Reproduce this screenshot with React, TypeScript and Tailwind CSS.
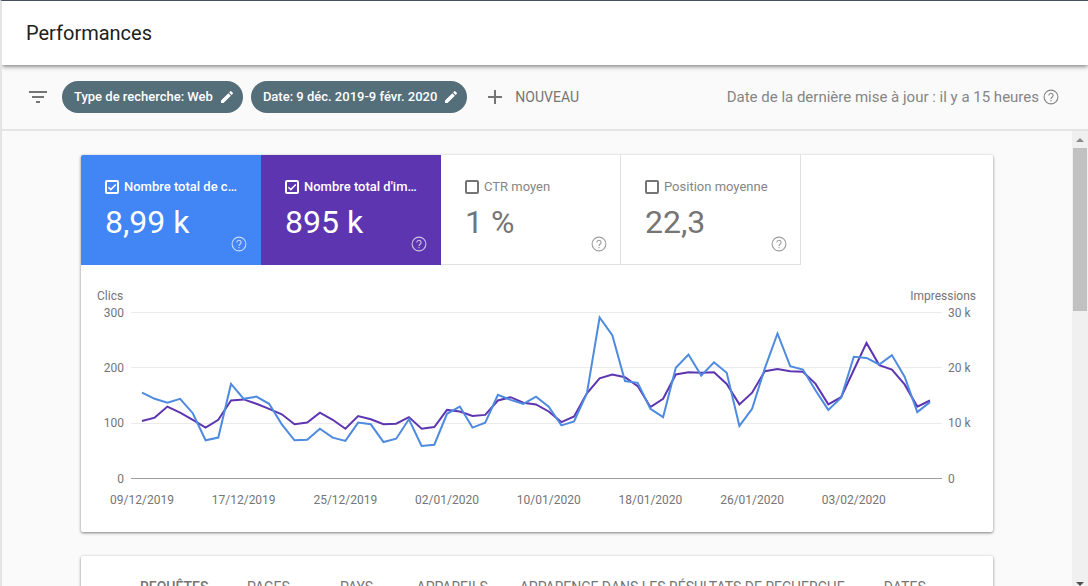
import React, { useState } from 'react';
import { MdAdd, MdEdit, MdFilterList } from 'react-icons/md';

interface Metric {
  id: string;
  label: string;
  value: string;
  active: string;
}

const METRICS: Metric[] = [
  { id: 'clicks', label: 'Nombre total de clics', value: '8,99 k', active: 'bg-[#4285f4] text-white' },
  { id: 'impressions', label: "Nombre total d'impressions", value: '895 k', active: 'bg-[#5e35b1] text-white' },
  { id: 'ctr', label: 'CTR moyen', value: '1 %', active: 'bg-[#00897b] text-white' },
  { id: 'position', label: 'Position moyenne', value: '22,3', active: 'bg-[#e8710a] text-white' },
];

// One value per day, 09/12/2019 to 09/02/2020
const CLICKS = [
  155, 144, 137, 144, 118, 69, 74, 171, 144, 148, 135, 98, 69, 70, 90, 74, 68, 101, 98, 66, 72,
  107, 59, 61, 117, 130, 92, 101, 151, 142, 135, 148, 130, 96, 103, 154, 291, 259, 176, 173, 126, 111,
  200, 224, 186, 210, 191, 95, 126, 199, 262, 203, 197, 159, 124, 146, 220, 218, 206, 223, 184, 120, 138,
];

// In hundreds, so both series share the same scale
const IMPRESSIONS = [
  104, 110, 130, 119, 106, 92, 106, 141, 143, 135, 126, 116, 98, 101, 119, 106, 90, 113, 107, 98, 99,
  111, 90, 93, 124, 121, 113, 115, 141, 147, 137, 134, 121, 102, 112, 154, 181, 188, 183, 167, 129, 144,
  188, 192, 191, 192, 171, 134, 155, 194, 198, 194, 193, 171, 134, 147, 196, 245, 205, 197, 170, 130, 141,
];

const DATES = ['09/12/2019', '17/12/2019', '25/12/2019', '02/01/2020', '10/01/2020', '18/01/2020', '26/01/2020', '03/02/2020'];

const TABS = ['Requêtes', 'Pages', 'Pays', 'Appareils', 'Apparence dans les résultats de recherche', 'Dates'];

const dayX = (day: number) => 61 + day * 12.71;
const valueY = (value: number) => 213.5 - (value * 166) / 300;
const toPoints = (values: number[]) => values.map((v, i) => `${dayX(i).toFixed(1)},${valueY(v).toFixed(1)}`).join(' ');

const HelpIcon: React.FC<{ className?: string }> = ({ className }) => (
  <svg viewBox="0 0 16 16" className={`size-4 ${className ?? ''}`} fill="none" stroke="currentColor" strokeWidth={1.1} aria-hidden="true">
    <circle cx="8" cy="8" r="6.9" />
    <path d="M5.9 6.4a2.1 2.1 0 1 1 3.5 1.5C8.6 8.6 8 8.9 8 9.9" />
    <path d="M8 10.9v1.3" />
  </svg>
);

const Chip: React.FC<{ children: React.ReactNode }> = ({ children }) => (
  <button className="flex h-8 items-center gap-1.5 rounded-full bg-[#546e7a] pr-2 pl-3 text-[13px] font-medium text-white">
    {children}
    <MdEdit className="size-4" />
  </button>
);

const MetricTile: React.FC<{ metric: Metric; checked: boolean; onToggle: () => void }> = ({ metric, checked, onToggle }) => (
  <div className={`relative h-[110px] w-[180px] pt-6 pr-[22px] pl-6 ${checked ? metric.active : 'border-r border-b border-[#e0e0e0] text-[#757575]'}`}>
    <div className="flex items-center gap-[5px]">
      <span className="relative flex size-3.5 shrink-0">
        <input
          id={metric.id}
          type="checkbox"
          checked={checked}
          onChange={onToggle}
          className="size-3.5 appearance-none rounded-xs border-2 border-current"
        />
        {checked && (
          <svg viewBox="0 0 14 14" className="pointer-events-none absolute inset-0" fill="none" stroke="currentColor" strokeWidth={1.5}>
            <path d="M3.4 7.2 5.8 9.6 10.8 4.4" />
          </svg>
        )}
      </span>
      <label htmlFor={metric.id} className={`truncate text-[13px] leading-4 ${checked ? 'font-medium' : 'text-[#858585]'}`}>
        {metric.label}
      </label>
    </div>
    <div className="mt-[7px] text-[32px] leading-10">{metric.value}</div>
    <button aria-label={`Aide : ${metric.label}`} className="absolute top-[81px] left-[150px] opacity-70">
      <HelpIcon className="block" />
    </button>
  </div>
);

const Chart: React.FC<{ showClicks: boolean; showImpressions: boolean }> = ({ showClicks, showImpressions }) => (
  <svg viewBox="0 0 912 267" className="block w-full fill-[#757575] text-[12px]">
    <text x="16" y="35">Clics</text>
    <text x="895" y="35" textAnchor="end">Impressions</text>
    {[300, 200, 100, 0].map((tick) => (
      <g key={tick}>
        <line x1="50" x2="861" y1={Math.floor(valueY(tick)) + 0.5} y2={Math.floor(valueY(tick)) + 0.5} stroke={tick ? '#ebebeb' : '#9e9e9e'} />
        <text x="43" y={valueY(tick) + 4} textAnchor="end">{tick}</text>
        <text x="867" y={valueY(tick) + 4}>{tick ? `${tick / 10} k` : '0'}</text>
      </g>
    ))}
    {DATES.map((date, i) => (
      <text key={date} x={dayX(i * 8)} y="239" textAnchor="middle">{date}</text>
    ))}
    {showImpressions && <polyline points={toPoints(IMPRESSIONS)} fill="none" stroke="#5e35b1" strokeWidth={2} />}
    {showClicks && <polyline points={toPoints(CLICKS)} fill="none" stroke="#4e8ae0" strokeWidth={2} />}
  </svg>
);

const App: React.FC = () => {
  const [selected, setSelected] = useState<string[]>(['clicks', 'impressions']);
  const [tab, setTab] = useState(TABS[0]);

  const toggle = (id: string) =>
    setSelected((prev) => (prev.includes(id) ? prev.filter((s) => s !== id) : [...prev, id]));

  return (
    <div className="flex h-screen flex-col overflow-hidden border-t border-l-2 border-t-[#455060] border-l-[#e4e4e4] bg-[#fafafa] font-[Roboto,sans-serif] text-[#757575]">
      {/* Header */}
      <header className="z-10 flex h-16 shrink-0 items-center bg-white px-6 shadow-[0_1px_5px_rgba(0,0,0,0.6)]">
        <h1 className="text-xl text-[#212121]">Performances</h1>
      </header>

      {/* Filters */}
      <div className="flex h-[66px] shrink-0 items-center border-b-2 border-[#e4e4e4] pr-[29px] pl-6">
        <button aria-label="Filtrer" className="mr-3">
          <MdFilterList className="size-6" />
        </button>
        <div className="flex gap-2">
          <Chip>Type de recherche: Web</Chip>
          <Chip>Date: 9 déc. 2019-9 févr. 2020</Chip>
        </div>
        <button className="ml-4 flex items-center gap-2 text-sm uppercase">
          <MdAdd className="size-6" />
          Nouveau
        </button>
        <div className="ml-auto flex items-center gap-1 text-[15px] text-[#858585]">
          Date de la dernière mise à jour : il y a 15 heures
          <button aria-label="Aide">
            <HelpIcon className="block" />
          </button>
        </div>
      </div>

      <div className="flex min-h-0 flex-1">
        {/* Content */}
        <main className="min-w-0 flex-1 overflow-hidden px-[79px] pt-6">
          <section className="overflow-hidden rounded-xs bg-white shadow-[0_1px_3px_rgba(0,0,0,0.5)]">
            <div className="flex">
              {METRICS.map((metric) => (
                <MetricTile key={metric.id} metric={metric} checked={selected.includes(metric.id)} onToggle={() => toggle(metric.id)} />
              ))}
            </div>
            <Chart showClicks={selected.includes('clicks')} showImpressions={selected.includes('impressions')} />
          </section>

          <section className="mt-6 rounded-xs bg-white shadow-[0_1px_3px_rgba(0,0,0,0.5)]">
            <nav className="flex px-[43px] pt-[19px]">
              {TABS.map((name) => (
                <button
                  key={name}
                  onClick={() => setTab(name)}
                  className={`min-w-[88px] px-4 text-sm leading-6 whitespace-nowrap uppercase ${tab === name ? 'font-medium' : ''}`}
                >
                  {name}
                </button>
              ))}
            </nav>
          </section>
        </main>

        {/* Scrollbar */}
        <div className="flex w-4 shrink-0 flex-col items-center bg-[#f0f0f0]" aria-hidden="true">
          <svg viewBox="0 0 16 17" className="h-[17px] w-4 shrink-0" fill="#8a8a8a">
            <path d="M4 11 8 7l4 4z" />
          </svg>
          <div className="h-[163px] w-3.5 bg-[#c1c1c1]" />
          <svg viewBox="0 0 16 4" className="mt-auto h-1 w-4 shrink-0" fill="#505050">
            <path d="M4 0h8L8 4z" />
          </svg>
        </div>
      </div>
    </div>
  );
};

export default App;
